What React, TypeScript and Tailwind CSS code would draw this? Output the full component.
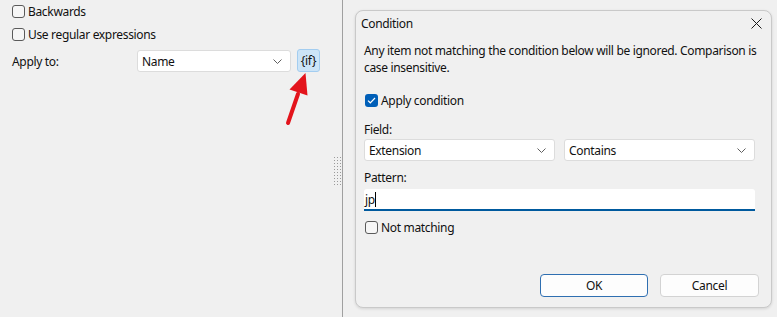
import React from "react";

const Chevron = () => (
  <svg width="9" height="5" viewBox="0 0 9 5" className="shrink-0">
    <path d="M0.5 0.5 L4.5 4.5 L8.5 0.5" fill="none" stroke="#5f5f5f" strokeWidth="1" />
  </svg>
);

const Box = ({ checked = false }: { checked?: boolean }) =>
  checked ? (
    <span className="w-[13px] h-[13px] rounded-[3px] bg-[#005fb8] flex items-center justify-center shrink-0">
      <svg width="9" height="7" viewBox="0 0 9 7">
        <path d="M1 3.6 L3.3 5.8 L8 1" fill="none" stroke="#ffffff" strokeWidth="1.2" />
      </svg>
    </span>
  ) : (
    <span className="w-[13px] h-[13px] rounded-[3px] border border-[#5a5a5a] bg-[#f6f6f6] shrink-0" />
  );

const Select = ({ value, className }: { value: string; className: string }) => (
  <div
    className={
      "h-[22px] bg-white border border-[#dcdcdc] rounded-[3px] flex items-center justify-between pl-[4px] pr-[8px] " +
      className
    }
  >
    <span>{value}</span>
    <Chevron />
  </div>
);

const Grip = () => {
  const dots: React.ReactElement[] = [];
  for (let r = 0; r < 10; r++) {
    for (let c = 0; c < 3; c++) {
      dots.push(<rect key={r + "-" + c} x={c * 3} y={r * 3} width="1" height="1" fill="#9a9a9a" />);
    }
  }
  return (
    <svg width="7" height="29" viewBox="0 0 7 29">
      {dots}
    </svg>
  );
};

export default function App() {
  return (
    <div className="flex w-[777px] h-[317px] bg-[#f0f0f0] text-[12px] leading-[17px] tracking-[-0.33px] text-[#111111] font-['Noto_Sans',sans-serif] overflow-hidden">
      {/* Left panel */}
      <div className="w-[343px] flex border-r border-[#a0a0a0] relative">
        <div className="flex-1 flex flex-col pl-[12px] pt-[2px]">
          <label className="flex items-center gap-[3px] h-[18px]">
            <Box />
            <span>Backwards</span>
          </label>
          <label className="flex items-center gap-[3px] h-[18px] mt-[5px]">
            <Box />
            <span>Use regular expressions</span>
          </label>
          <div className="flex items-center h-[24px] mt-[6px]">
            <span className="w-[125px]">Apply to:</span>
            <Select value="Name" className="w-[154px]" />
            <div className="ml-[6px] w-[23px] h-[23px] rounded-[3px] bg-[#cce4f7] border border-[#a3cdf0] flex items-center justify-center -mt-[2px]">
              {"{if}"}
            </div>
          </div>
        </div>
        <div className="w-[9px] flex flex-col items-center pt-[157px]">
          <Grip />
        </div>
        <svg
          className="absolute left-[280px] top-[68px]"
          width="40"
          height="62"
          viewBox="280 68 40 62"
        >
          <path d="M288 123 L298 94" stroke="#e3141c" strokeWidth="4" strokeLinecap="round" />
          <path d="M305.5 73 L289.5 89.5 L307.5 95.5 Z" fill="#e3141c" />
        </svg>
      </div>

      {/* Right area */}
      <div className="flex-1 pl-[12px] pt-[10px]">
        <div className="w-[417px] h-[298px] bg-[#f0f0f0] border border-[#c9c9c9] rounded-[8px] shadow-[0_1px_3px_rgba(0,0,0,0.12)] flex flex-col">
          <div className="h-[24px] flex items-center justify-between pl-[5px] pr-[9px]">
            <span>Condition</span>
            <svg width="11" height="11" viewBox="0 0 11 11">
              <path d="M0.5 0.5 L10.5 10.5 M10.5 0.5 L0.5 10.5" stroke="#1a1a1a" strokeWidth="1" />
            </svg>
          </div>
          <div className="flex-1 flex flex-col px-[8px]">
            <p className="mt-[7px] pr-[2px]">
              Any item not matching the condition below will be ignored. Comparison is case insensitive.
            </p>
            <label className="flex items-center gap-[3px] h-[17px] mt-[16px] pl-[1px]">
              <Box checked />
              <span>Apply condition</span>
            </label>
            <div className="pr-[8px] flex flex-col">
              <span className="mt-[12px]">Field:</span>
              <div className="flex gap-[9px] mt-[1px]">
                <Select value="Extension" className="w-[191px]" />
                <Select value="Contains" className="flex-1" />
              </div>
              <span className="mt-[8px]">Pattern:</span>
              <div className="mt-[3px] h-[22px] bg-white border-b-2 border-[#005a9e] rounded-t-[3px] flex items-center pl-[1px]">
                <span>jp</span>
                <span className="w-[1px] h-[15px] bg-black" />
              </div>
              <label className="flex items-center gap-[3px] h-[17px] mt-[8px] pl-[1px]">
                <Box />
                <span>Not matching</span>
              </label>
            </div>
            <div className="flex-1" />
            <div className="flex justify-end gap-[12px] pr-[4px] mb-[10px]">
              <div className="w-[108px] h-[23px] rounded-[4px] bg-[#fdfdfd] border border-[#2f6fb1] flex items-center justify-center">
                OK
              </div>
              <div className="w-[99px] h-[23px] rounded-[4px] bg-[#fdfdfd] border border-[#d3d3d3] flex items-center justify-center">
                Cancel
              </div>
            </div>
          </div>
        </div>
      </div>
    </div>
  );
}
